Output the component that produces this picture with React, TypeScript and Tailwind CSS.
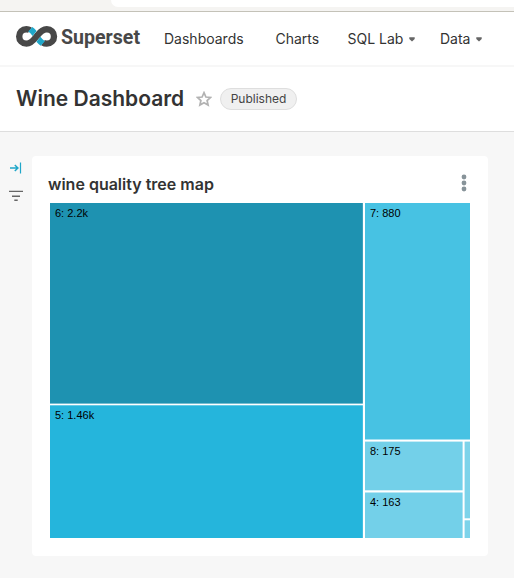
import React from "react";

type Cell = { x: number; y: number; w: number; h: number; fill: string; label?: string; lx?: number; ly?: number };

const cells: Cell[] = [
  { x: 0, y: 0, w: 312.85, h: 200.6, fill: "#1e92b1", label: "6: 2.2k", lx: 5, ly: 14 },
  { x: 0, y: 202.3, w: 312.85, h: 132.7, fill: "#25b5dc", label: "5: 1.46k", lx: 5, ly: 216 },
  { x: 315, y: 0, w: 105, h: 236.5, fill: "#47c2e3", label: "7: 880", lx: 320, ly: 14 },
  { x: 315, y: 238.6, w: 97.6, h: 48.7, fill: "#73d0e9", label: "8: 175", lx: 320, ly: 252 },
  { x: 315, y: 289.5, w: 97.6, h: 45.5, fill: "#73d0e9", label: "4: 163", lx: 320, ly: 303 },
  { x: 414.6, y: 238.6, w: 5.4, h: 76.7, fill: "#7dd3ea" },
  { x: 414.6, y: 317.3, w: 5.4, h: 17.7, fill: "#7dd3ea" },
];

function Logo() {
  return (
    <svg width="130" height="28" viewBox="0 0 130 28" className="block shrink-0 overflow-visible">
      <g fill="none" strokeWidth="6.4">
        <path
          d="M14 6.2C13 5.5 11.6 5.2 10.4 5.2C6.3 5.2 3.2 8.3 3.2 12.4S6.3 19.6 10.4 19.6C15.3 19.6 18 15.6 20.5 12.4S25.7 5.2 30.8 5.2C34.9 5.2 38 8.3 38 12.4S34.9 19.6 30.8 19.6C29.6 19.6 28 19.3 27 18.6"
          stroke="#484848"
        />
      </g>
      <path d="M12.2 7.6L16.4 3.1Q18.6 4.6 20.6 7.1L16.6 12.1Q14.4 9 12.2 7.6Z" fill="#20a7c9" />
      <path d="M28.9 17.3L24.7 21.8Q22.5 20.2 20.4 17.7L24.4 12.8Q26.8 16 28.9 17.3Z" fill="#20a7c9" />
      <text x="45" y="20" textLength="79" lengthAdjust="spacingAndGlyphs" fill="#484848" fontFamily="Roboto, sans-serif" fontWeight="700" fontSize="20">
        Superset
      </text>
    </svg>
  );
}

function Caret() {
  return (
    <svg width="6" height="5" viewBox="0 0 6 5" className="ml-[6px] block">
      <path d="M.3 .3H5.7V2L3 4.4L.3 2Z" fill="#666" />
    </svg>
  );
}

function Navbar() {
  return (
    <nav className="flex h-[55px] items-start border-b-2 border-[#f7f7f7] bg-white pl-4 text-[14px] leading-[20px]">
      <div className="mt-[12px]"><Logo /></div>
      <div className="mt-[17px] flex">
        <a className="ml-[18px] w-[111.5px]">Dashboards</a>
        <a className="w-[72px]">Charts</a>
        <a className="flex w-[92.5px] items-center whitespace-nowrap">SQL Lab<Caret /></a>
        <a className="flex items-center">Data<Caret /></a>
      </div>
    </nav>
  );
}

function Heading() {
  return (
    <header className="flex h-[65px] items-center border-b border-[#dedede] bg-white pl-4">
      <h1 className="w-[180px] whitespace-nowrap text-[21px] font-semibold leading-8">Wine Dashboard</h1>
      <svg width="16" height="16" viewBox="0 0 16 16" className="block">
        <path d="M8 1.7L9.9 6L14.5 6.4L11.1 9.5L12.1 14L8 11.7L3.9 14L4.9 9.5L1.5 6.4L6.1 6Z" fill="none" stroke="#b2b2b2" strokeWidth="1.7" />
      </svg>
      <span className="ml-2 flex h-[22px] w-[77px] items-center justify-center rounded-full border border-[#dedede] bg-[#f0f0f0] text-[12px] text-[#444]">
        Published
      </span>
    </header>
  );
}

function FilterRail() {
  return (
    <aside className="flex w-8 flex-col pl-[9px] pt-[30px]">
      <svg width="14" height="12" viewBox="0 0 14 12" className="block">
        <path d="M1 6H9M5.8 3L8.9 6L5.8 9" fill="none" stroke="#20a7c9" strokeWidth="1.5" />
        <path d="M11.5 .5V11.5" stroke="#20a7c9" strokeWidth="1.2" />
      </svg>
      <svg width="14" height="12" viewBox="0 0 14 12" className="mt-[16px] block">
        <path d="M0 1.4H14M3 6.2H11M5.3 10.2H8.7" stroke="#666" strokeWidth="1.4" />
      </svg>
    </aside>
  );
}

function TreeMap() {
  return (
    <svg width="420" height="335" viewBox="0 0 420 335" className="ml-[2px] block">
      {cells.map((c, i) => (
        <g key={i}>
          <rect x={c.x} y={c.y} width={c.w} height={c.h} fill={c.fill} />
          {c.label && (
            <text x={c.lx} y={c.ly} fontSize="11" fontFamily="'Liberation Sans', sans-serif" fill="#000">
              {c.label}
            </text>
          )}
        </g>
      ))}
    </svg>
  );
}

export default function App() {
  return (
    <div className="h-[578px] w-[514px] overflow-hidden bg-[#f7f7f7] font-['Inter',sans-serif] text-[#333]">
      <div className="h-3 border-b border-[#c4c2b8] bg-[#f5f4f2] pl-[111px]">
        <div className="h-[7px] rounded-bl-[12px] bg-white" />
      </div>
      <Navbar />
      <Heading />
      <main className="flex">
        <FilterRail />
        <section className="mt-6 h-[400px] w-[456px] rounded bg-white px-4">
          <div className="flex h-[47px] items-start justify-between pr-[5px]">
            <h2 className="mt-[18px] whitespace-nowrap text-[16px] font-semibold leading-5">wine quality tree map</h2>
            <svg width="6" height="18" viewBox="0 0 6 18" className="mt-[18px] block" fill="#879399">
              <circle cx="3" cy="3" r="2.4" />
              <circle cx="3" cy="9" r="2.4" />
              <circle cx="3" cy="15" r="2.4" />
            </svg>
          </div>
          <TreeMap />
        </section>
      </main>
    </div>
  );
}
